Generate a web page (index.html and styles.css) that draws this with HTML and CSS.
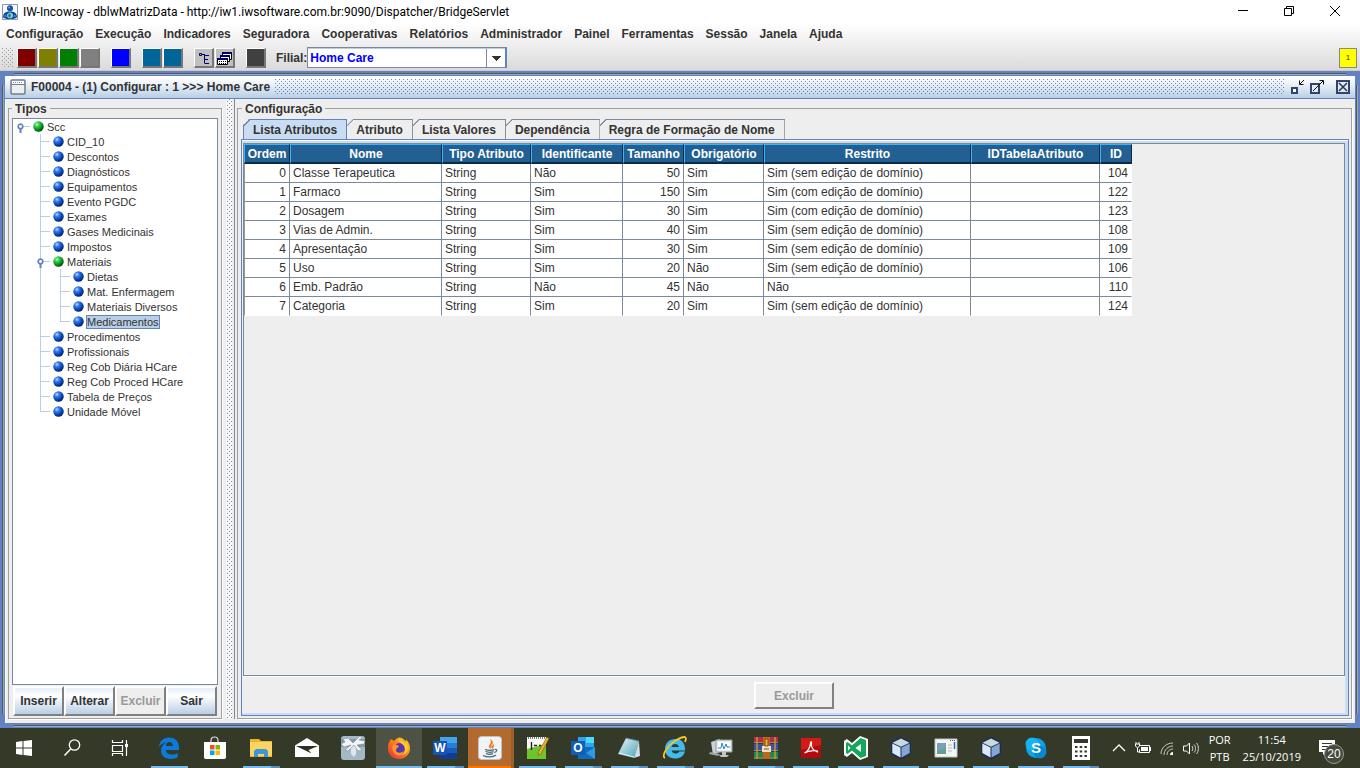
FILE: index.html
```html
<!DOCTYPE html>
<html lang="pt-BR">
<head>
    <meta charset="UTF-8">
    <title>IW-Incoway</title>
    <link rel="stylesheet" href="styles.css">
</head>
<body>
    <svg class="defs" width="0" height="0" aria-hidden="true">
        <defs>
            <radialGradient id="blueBall" cx="35%" cy="30%" r="70%">
                <stop offset="0" stop-color="#c4dcff"/>
                <stop offset="0.3" stop-color="#3c7ef0"/>
                <stop offset="0.65" stop-color="#0a4cc4"/>
                <stop offset="1" stop-color="#032468"/>
            </radialGradient>
            <radialGradient id="greenBall" cx="35%" cy="30%" r="70%">
                <stop offset="0" stop-color="#c8ffc8"/>
                <stop offset="0.3" stop-color="#38d050"/>
                <stop offset="0.65" stop-color="#0d9a26"/>
                <stop offset="1" stop-color="#04500f"/>
            </radialGradient>
            <linearGradient id="foxBody" x1="0" y1="1" x2="1" y2="0">
                <stop offset="0" stop-color="#f0204c"/>
                <stop offset="0.5" stop-color="#ff7a18"/>
                <stop offset="1" stop-color="#ffe03a"/>
            </linearGradient>
            <linearGradient id="glass" x1="0" y1="0" x2="1" y2="1">
                <stop offset="0" stop-color="#e6f8fb"/>
                <stop offset="1" stop-color="#4fa0b4"/>
            </linearGradient>
            <symbol id="blue" viewBox="0 0 11 11"><circle cx="5.5" cy="5.5" r="5.2" fill="url(#blueBall)"/></symbol>
            <symbol id="green" viewBox="0 0 11 11"><circle cx="5.5" cy="5.5" r="5.2" fill="url(#greenBall)"/></symbol>
            <symbol id="handle" viewBox="0 0 7 10">
                <circle cx="3.5" cy="3.5" r="2.3" fill="#fff" stroke="#6382bf" stroke-width="1.7"/>
                <path d="M3.5 6v4" stroke="#6382bf" stroke-width="2"/>
            </symbol>
            <symbol id="cube" viewBox="0 0 24 24">
                <path d="M12 1l10 5v12l-10 5.500-10-5.500V6z" fill="#1c2a58"/>
                <path d="M12 2.500l8.500 4.200-8.500 4-8.500-4z" fill="#c6dcdc"/>
                <path d="M3.300 7.500l8.200 4v10L3.300 17z" fill="#d9e8fa"/>
                <path d="M20.700 7.500l-8.200 4v10l8.200-4.500z" fill="#86a6d2"/>
            </symbol>
        </defs>
    </svg>

    <header class="title-bar">
        <svg class="app-icon" viewBox="0 0 16 16">
            <path d="M.5.5h15v15H.5z" fill="#f4f8fc" stroke="#8c98ac"/>
            <circle cx="8" cy="4.200" r="3" fill="#1450a8"/>
            <circle cx="7.200" cy="3.400" r="1" fill="#6ea2e4"/>
            <path d="M1 13c0-3 2-5 5-5.500h4c3 .5 5 2.500 5 5.500-1 1.500-3 2-7 2s-6-.5-7-2z" fill="#0c3c90"/>
            <circle cx="8" cy="11.500" r="3" fill="#7ad0e8"/>
            <path d="M7 9l2 2-1 3-2-2z" fill="#1f8a50"/>
            <path d="M2 11.500l2-1.500 1 3H2zM14 11.500L12 10l-1 3h3z" fill="#3a7ad4"/>
        </svg>
        <h1 class="app-title">IW-Incoway - dblwMatrizData - http://iw1.iwsoftware.com.br:9090/Dispatcher/BridgeServlet</h1>
        <button class="win-btn" aria-label="Minimizar"><svg viewBox="0 0 12 12"><path d="M1 5.500h10" stroke="#000"/></svg></button>
        <button class="win-btn" aria-label="Restaurar"><svg viewBox="0 0 12 12"><path d="M1.500 3.500h7v7h-7zM3.500 3V1.500h7v7H9" fill="none" stroke="#000"/></svg></button>
        <button class="win-btn" aria-label="Fechar"><svg viewBox="0 0 12 12"><path d="M1 1l10 10M11 1L1 11" stroke="#000"/></svg></button>
    </header>

    <div class="bars">
        <nav class="menu-bar">
            <button>Configuração</button>
            <button>Execução</button>
            <button>Indicadores</button>
            <button>Seguradora</button>
            <button>Cooperativas</button>
            <button>Relatórios</button>
            <button>Administrador</button>
            <button>Painel</button>
            <button>Ferramentas</button>
            <button>Sessão</button>
            <button>Janela</button>
            <button>Ajuda</button>
        </nav>

        <div class="tool-bar">
            <span class="grip"></span>
            <div class="tool-group">
                <button class="tool maroon" aria-label="Vermelho"></button>
                <button class="tool olive" aria-label="Oliva"></button>
                <button class="tool green" aria-label="Verde"></button>
                <button class="tool gray" aria-label="Cinza"></button>
            </div>
            <div class="tool-group">
                <button class="tool blue" aria-label="Azul"></button>
            </div>
            <div class="tool-group">
                <button class="tool teal" aria-label="Petróleo 1"></button>
                <button class="tool teal" aria-label="Petróleo 2"></button>
            </div>
            <div class="tool-group">
                <button class="tool silver" aria-label="Árvore">
                    <svg viewBox="0 0 17 17"><path d="M4.500 4.500h2v2h-2zM6.500 5.500h3M9.500 5v9M9.500 6.500H14M9.500 10.500H13M9.500 14.500H14" fill="none" stroke="#000070"/></svg>
                </button>
                <button class="tool silver" aria-label="Janelas">
                    <svg viewBox="0 0 17 17">
                        <path d="M6.500 3.500h9v7h-9z" fill="#fff" stroke="#000"/><path d="M6 3h10v2H6z" fill="#000070"/>
                        <path d="M4.500 6.500h9v6h-9z" fill="#fff" stroke="#000"/><path d="M4 6h10v2H4z" fill="#000070"/>
                        <path d="M1.500 9.500h10v6h-10z" fill="#fff" stroke="#000"/><path d="M1 9h11v2H1z" fill="#000070"/>
                        <path d="M3 12.500h7M3 14.500h7" stroke="#000" stroke-dasharray="1 1"/>
                    </svg>
                </button>
            </div>
            <div class="tool-group">
                <button class="tool dark" aria-label="Grafite"></button>
            </div>
            <label class="filial-label" for="filial">Filial:</label>
            <select class="filial" id="filial"><option>Home Care</option></select>
            <button class="alert-btn">1</button>
        </div>
    </div>

    <main class="frame">
        <div class="frame-title">
            <svg class="frame-icon" viewBox="0 0 16 16">
                <rect x="1" y="1" width="14" height="14" rx="1" fill="#eee" stroke="#6f7f8f" stroke-width="1.500"/>
                <path d="M2 2h12v3H2z" fill="#fff"/><path d="M3 3.500h10" stroke="#6382bf" stroke-dasharray="1 1"/>
                <path d="M1 5.500h14" stroke="#6f7f8f"/>
            </svg>
            <h2>F00004 - (1) Configurar : 1 &gt;&gt;&gt; Home Care</h2>
            <span class="bumps"></span>
            <button class="frame-btn" aria-label="Minimizar janela">
                <svg viewBox="0 0 16 16"><path d="M3 9h5v5H3z" fill="#fff" stroke="#33446a" stroke-width="2"/><path d="M15 1l-4 4M10.500 1.500v4h4" fill="none" stroke="#111"/></svg>
            </button>
            <button class="frame-btn" aria-label="Maximizar janela">
                <svg viewBox="0 0 16 16"><path d="M2 5h8v9H2z" fill="#e4edf7" stroke="#33446a" stroke-width="2"/><path d="M4 12l10-10M10.500 1.500h4v4" fill="none" stroke="#111"/></svg>
            </button>
            <button class="frame-btn close" aria-label="Fechar janela">
                <svg viewBox="0 0 16 16"><path d="M2 2h12v12H2z" fill="#dfe9f5" stroke="#33446a" stroke-width="2"/><path d="M4 4l8 8M12 4l-8 8" stroke="#26364f" stroke-width="1.500"/></svg>
            </button>
        </div>

        <div class="frame-body">
            <fieldset class="panel types">
                <legend>Tipos</legend>
                <div class="tree-box">
                    <ul class="tree">
                        <li>
                            <button class="handle" aria-label="Recolher Scc"><svg><use href="#handle"/></svg></button>
                            <div class="node"><svg><use href="#green"/></svg><span>Scc</span></div>
                            <ul>
                                <li><div class="node"><svg><use href="#blue"/></svg><span>CID_10</span></div></li>
                                <li><div class="node"><svg><use href="#blue"/></svg><span>Descontos</span></div></li>
                                <li><div class="node"><svg><use href="#blue"/></svg><span>Diagnósticos</span></div></li>
                                <li><div class="node"><svg><use href="#blue"/></svg><span>Equipamentos</span></div></li>
                                <li><div class="node"><svg><use href="#blue"/></svg><span>Evento PGDC</span></div></li>
                                <li><div class="node"><svg><use href="#blue"/></svg><span>Exames</span></div></li>
                                <li><div class="node"><svg><use href="#blue"/></svg><span>Gases Medicinais</span></div></li>
                                <li><div class="node"><svg><use href="#blue"/></svg><span>Impostos</span></div></li>
                                <li>
                                    <button class="handle" aria-label="Recolher Materiais"><svg><use href="#handle"/></svg></button>
                                    <div class="node"><svg><use href="#green"/></svg><span>Materiais</span></div>
                                    <ul>
                                        <li><div class="node"><svg><use href="#blue"/></svg><span>Dietas</span></div></li>
                                        <li><div class="node"><svg><use href="#blue"/></svg><span>Mat. Enfermagem</span></div></li>
                                        <li><div class="node"><svg><use href="#blue"/></svg><span>Materiais Diversos</span></div></li>
                                        <li><div class="node"><svg><use href="#blue"/></svg><span class="selected">Medicamentos</span></div></li>
                                    </ul>
                                </li>
                                <li><div class="node"><svg><use href="#blue"/></svg><span>Procedimentos</span></div></li>
                                <li><div class="node"><svg><use href="#blue"/></svg><span>Profissionais</span></div></li>
                                <li><div class="node"><svg><use href="#blue"/></svg><span>Reg Cob Diária HCare</span></div></li>
                                <li><div class="node"><svg><use href="#blue"/></svg><span>Reg Cob Proced HCare</span></div></li>
                                <li><div class="node"><svg><use href="#blue"/></svg><span>Tabela de Preços</span></div></li>
                                <li><div class="node"><svg><use href="#blue"/></svg><span>Unidade Móvel</span></div></li>
                            </ul>
                        </li>
                    </ul>
                </div>
                <div class="actions">
                    <button class="btn">Inserir</button>
                    <button class="btn">Alterar</button>
                    <button class="btn" disabled>Excluir</button>
                    <button class="btn">Sair</button>
                </div>
            </fieldset>

            <div class="splitter"></div>

            <fieldset class="panel config">
                <legend>Configuração</legend>
                <div class="tabs" role="tablist">
                    <button class="tab active" role="tab" aria-selected="true">Lista Atributos</button>
                    <button class="tab" role="tab">Atributo</button>
                    <button class="tab" role="tab">Lista Valores</button>
                    <button class="tab" role="tab">Dependência</button>
                    <button class="tab" role="tab">Regra de Formação de Nome</button>
                </div>
                <div class="tab-pane">
                    <div class="table-box">
                        <table class="grid">
                            <colgroup>
                                <col class="c-ordem"><col class="c-nome"><col class="c-tipo"><col class="c-ident"><col class="c-tam"><col class="c-obr"><col class="c-restrito"><col class="c-tabela"><col class="c-id">
                            </colgroup>
                            <thead>
                                <tr><th>Ordem</th><th>Nome</th><th>Tipo Atributo</th><th>Identificante</th><th>Tamanho</th><th>Obrigatório</th><th>Restrito</th><th>IDTabelaAtributo</th><th>ID</th></tr>
                            </thead>
                            <tbody>
                                <tr><td class="num">0</td><td>Classe Terapeutica</td><td>String</td><td>Não</td><td class="num">50</td><td>Sim</td><td>Sim (sem edição de domínio)</td><td></td><td class="num">104</td></tr>
                                <tr><td class="num">1</td><td>Farmaco</td><td>String</td><td>Sim</td><td class="num">150</td><td>Sim</td><td>Sim (com edição de domínio)</td><td></td><td class="num">122</td></tr>
                                <tr><td class="num">2</td><td>Dosagem</td><td>String</td><td>Sim</td><td class="num">30</td><td>Sim</td><td>Sim (com edição de domínio)</td><td></td><td class="num">123</td></tr>
                                <tr><td class="num">3</td><td>Vias de Admin.</td><td>String</td><td>Sim</td><td class="num">40</td><td>Sim</td><td>Sim (sem edição de domínio)</td><td></td><td class="num">108</td></tr>
                                <tr><td class="num">4</td><td>Apresentação</td><td>String</td><td>Sim</td><td class="num">30</td><td>Sim</td><td>Sim (sem edição de domínio)</td><td></td><td class="num">109</td></tr>
                                <tr><td class="num">5</td><td>Uso</td><td>String</td><td>Sim</td><td class="num">20</td><td>Não</td><td>Sim (sem edição de domínio)</td><td></td><td class="num">106</td></tr>
                                <tr><td class="num">6</td><td>Emb. Padrão</td><td>String</td><td>Não</td><td class="num">45</td><td>Não</td><td>Não</td><td></td><td class="num">110</td></tr>
                                <tr><td class="num">7</td><td>Categoria</td><td>String</td><td>Sim</td><td class="num">20</td><td>Sim</td><td>Sim (sem edição de domínio)</td><td></td><td class="num">124</td></tr>
                            </tbody>
                        </table>
                    </div>
                    <div class="pane-footer">
                        <button class="btn wide" disabled>Excluir</button>
                    </div>
                </div>
            </fieldset>
        </div>
    </main>

    <footer class="task-bar">
        <button class="task sys" aria-label="Iniciar"><svg viewBox="0 0 24 24"><path d="M4 6l6.500-1v6.500H4zM11.500 4.900L20 4v7.500h-8.500zM4 12.500h6.500V19L4 18zM11.500 12.500H20V20l-8.500-1z" fill="#fff"/></svg></button>
        <button class="task sys" aria-label="Pesquisar"><svg viewBox="0 0 24 24"><circle cx="14.500" cy="9" r="5.200" fill="none" stroke="#fff" stroke-width="1.300"/><path d="M10.700 13L4.500 19.500" stroke="#fff" stroke-width="1.500"/></svg></button>
        <button class="task sys" aria-label="Visão de tarefas"><svg viewBox="0 0 24 24"><path d="M3.500 4v2.500h10V4M3.500 9.500h10v6h-10zM3.500 20v-2.500h10V20M17.500 4v16" fill="none" stroke="#fff" stroke-width="1.200"/><path d="M16 8h3v3h-3z" fill="#fff"/></svg></button>

        <button class="task open" aria-label="Edge"><svg viewBox="0 0 24 24"><path d="M2 11C2.500 5 6.500 1.500 12 1.500c6 0 10 4.200 10 9.700V14H8.700c.3 3 3 4.500 6 4.500 2.300 0 4.300-.6 6-1.600v4.400c-2 1.100-4.300 1.600-7 1.600C7.500 22.900 4 19 4 14.500c0-3.300 1.900-6.300 5.500-8C5.800 6.900 3.500 8.500 2 11zm6.900-1h6.900c0-2.400-1.200-4-3.400-4-2 0-3.300 1.600-3.500 4z" fill="#0a7bdc"/></svg></button>
        <button class="task" aria-label="Store"><svg viewBox="0 0 24 24"><path d="M8 7V4.500C8 2 9.500 1 11.500 1S15 2 15 4.500V7" fill="none" stroke="#ddd" stroke-width="1.200"/><path d="M1 6h22v15.500l-1 1.500H2l-1-1.500z" fill="#fff"/><path d="M7 9h4.500v4.500H7z" fill="#f25022"/><path d="M12.500 9H17v4.500h-4.500z" fill="#7fba00"/><path d="M7 14.500h4.500V19H7z" fill="#00a4ef"/><path d="M12.500 14.500H17V19h-4.500z" fill="#ffb900"/></svg></button>
        <button class="task open many" aria-label="Explorador"><svg viewBox="0 0 24 24"><path d="M1 3h9l2 2h11v16H1z" fill="#f0b429"/><path d="M1 6h22v14H1z" fill="#fcd462"/><path d="M5 21v-6l2-2h10l2 2v6h-4v-3H9v3z" fill="#3e97d8"/></svg></button>
        <button class="task" aria-label="E-mail"><svg viewBox="0 0 24 24"><path d="M0 9.500L12 2l12 7.500V21H0z" fill="#fff"/><path d="M1 10h22l-9.500 4 3 3.500z" fill="#2c3023"/></svg></button>
        <button class="task" aria-label="Presente"><svg viewBox="0 0 24 24"><rect width="24" height="24" rx="3" fill="#a4b8c6"/><path d="M0 7h24" stroke="#8497a5" stroke-width="8"/><path d="M10 9h5v9l-2 3-3-3z" fill="#dfe7ec"/><path d="M12 7L7 2 2 3l2 3-4 2 3 3 7-2-6 5 3 1 6-6 4 6 4-1-5-5 7-1 1-3-6-1 3-2-2-2z" fill="#f1f5f7" stroke="#7f909c" stroke-width=".6"/></svg></button>
        <button class="task lit" aria-label="Firefox"><svg viewBox="0 0 24 24"><path d="M12 1.500C9 2.500 7 5 7 5L4 3C1 7 1 10 1 13c0 6 5 10 11 10s11-4.500 11-10.500C23 7 20 5 19 3.500c0 1-.3 2-.3 2C17 3 14 1 12 1.500z" fill="url(#foxBody)"/><circle cx="12.500" cy="13" r="6" fill="#5a32b4"/><path d="M6 9c2-1 4 0 6 1-1 2-3 2-3 4 0 3 4 4 8 1-1 4-4 5-6 4.500C7 19 4 14 6 9z" fill="#ff9a20"/><path d="M12 3c-1 3 3 4 5 7 2 4 0 8-3 9 6-.5 8-5 7-9-2-4-6-4-9-7z" fill="#ffc830"/></svg></button>
        <button class="task open many" aria-label="Word"><svg viewBox="0 0 24 24"><path d="M7 1h17v6H7z" fill="#41a5ee"/><path d="M7 7h17v5H7z" fill="#2b7cd3"/><path d="M7 12h17v5H7z" fill="#185abd"/><path d="M7 17h17v6H7z" fill="#103f91"/><path d="M0 5h14v14H0z" fill="#1553b5"/><text class="logo-text" x="7" y="16">W</text></svg></button>
        <button class="task java" aria-label="Java"><svg viewBox="0 0 24 24"><rect x=".5" y=".5" width="23" height="23" rx="3" fill="#f1f3f4" stroke="#b9c4cc"/><path d="M12.500 12.500c-4-3 3-4.500 0-9 5 4-1 5 0 9zM14.500 12.500c-2-2 0-3 1.500-4-1 1.500 0 2-1.500 4z" fill="#e76f1e" stroke="#e76f1e" stroke-width=".6"/><path d="M7 13.500c3 1 7 1 9.500 0M7.500 15.500c3 1 6 1 8 0M8 17.500c2 1 5 1 7 0M5 19.500c4 2 10 2 13-.5M17 13.500c3-.5 2 2.500-1 3" fill="none" stroke="#4a6478" stroke-width="1.200"/></svg></button>
        <button class="task open" aria-label="Notepad++"><svg viewBox="0 0 24 24"><path d="M2 1h19v22H2z" fill="#f7f8f2"/><path d="M2 13c6-2 13-3 19-6v16H2z" fill="#6cc52a"/><path d="M3 2h17" stroke="#555" stroke-width="1.500" stroke-dasharray="1 1"/><path d="M6.500 6v8M9 9.500h3M14 9.500h2" stroke="#222" stroke-width="1.400"/><path d="M22 1l2 1.500-8 15-3 2 .5-3.500z" fill="#f0b52c" stroke="#80551a" stroke-width=".6"/></svg></button>
        <button class="task open many" aria-label="Outlook"><svg viewBox="0 0 24 24"><path d="M7 1h16v11H7z" fill="#28a8ea"/><path d="M15 1h8v6h-8z" fill="#50d9ff"/><path d="M7 11h17v12H7z" fill="#0f6cbd"/><path d="M24 11v12l-9-6z" fill="#3199e0"/><path d="M0 5h14v14H0z" fill="#0f5fb8"/><text class="logo-text" x="7" y="16">O</text></svg></button>
        <button class="task open many" aria-label="Bloco de notas"><svg viewBox="0 0 24 24"><path d="M9 2l13 3-5 17L1 18z" fill="url(#glass)"/><path d="M22 5l1 15-6 2z" fill="#cde0e5"/><path d="M9 2l13 3" stroke="#60717a" stroke-width="1.500" stroke-dasharray="1 1"/><path d="M2 17l15 4" stroke="#dff5f8"/></svg></button>
        <button class="task open many" aria-label="Internet Explorer"><svg viewBox="0 0 24 24"><path d="M2 13C2 7 6.500 3 12.500 3S22 7 22 13v1.500H8.500c.5 2 2 3 4 3 1.700 0 3-.6 3.800-2H22c-1.300 4.500-5 7-9.800 7C6 22.500 2 18.500 2 13zm6.500-2h7.300c-.3-2-1.700-3-3.600-3s-3.300 1-3.700 3z" fill="#43baf0"/><path d="M2 22c-4-2 2-12 10-17S25-1 22 6" fill="none" stroke="#f5c52c" stroke-width="1.800"/></svg></button>
        <button class="task open narrow" aria-label="Monitor"><svg viewBox="0 0 24 24"><path d="M2 6l9-3v13l-7 3z" fill="#cdd1d3"/><path d="M1 16l10 2-2 2-9-2z" fill="#9da4a6"/><path d="M7 4h16v12H7z" fill="#e5ebef" stroke="#939ba0"/><path d="M9 6h12v8H9z" fill="#fff"/><path d="M9 12h3l1-5 2 6 2-5 1 3h3" fill="none" stroke="#2588be"/><path d="M13 16h4v3h3l-2 2h-6l-2-2h3z" fill="#bfc5c8"/></svg></button>
        <button class="task open many narrow" aria-label="WinRAR"><svg viewBox="0 0 24 24"><path d="M0 1h24v6H0z" fill="#b62c48"/><path d="M0 8h24v7H0z" fill="#434fa0"/><path d="M0 16h24v7H0z" fill="#298447"/><path d="M0 6.500h24M0 14.500h24M0 22h24" stroke="#8c8c78"/><path d="M3 1v22M21 1v22" stroke="#d4a736" stroke-width="1.200"/><path d="M9 1h7v22H9z" fill="#bd661d"/><path d="M8 10h9v6H8z" fill="#ece2cb"/><path d="M11 3h3v7h-3zM10 13h5" fill="#f3b432" stroke="#8c4a12"/></svg></button>
        <button class="task open narrow" aria-label="PDF"><svg viewBox="0 0 24 24"><path d="M2 2h20v20H2z" fill="#b30b0b"/><path d="M2 2h20v7L2 14z" fill="#d51a16"/><path d="M5.500 17c3-1 6-6 6-10 0-2 1.500-1 1 0-1 4 2 8 6 9 1-2-8-2-13 1z" fill="none" stroke="#fff" stroke-width="1.200"/></svg></button>
        <button class="task open narrow" aria-label="Visual Studio"><svg viewBox="0 0 24 24"><path d="M16 0l8 3v18l-8 3-8-7-5 4-3-2V5l3-2 5 4z" fill="#fff"/><path d="M16.500 2L22 4v16l-5.500 2L8 14.500 3.500 18 2 17V7l1.500-1L8 9.500zm.5 6l-5.500 4 5.500 4zM4 9.500v5L6.500 12z" fill="#14a65a" fill-rule="evenodd"/></svg></button>
        <button class="task open narrow" aria-label="VirtualBox"><svg><use href="#cube"/></svg></button>
        <button class="task open narrow" aria-label="Janela"><svg viewBox="0 0 24 24"><path d="M1 3h22v18H1z" fill="#f4f5f5" stroke="#bfc4c6"/><path d="M3 7h9v11H3z" fill="#63a18c"/><path d="M3 7h9v5L3 15z" fill="#7a9fb8"/><path d="M14 9h4M14 12h4M14 15h4" stroke="#bbb"/><path d="M20.500 6v7" stroke="#286bc0" stroke-width="1.500"/><path d="M16 4.500h5" stroke="#555" stroke-dasharray="1 1"/></svg></button>
        <button class="task open narrow" aria-label="VirtualBox 2"><svg><use href="#cube"/></svg></button>
        <button class="task open narrow" aria-label="Skype"><svg viewBox="0 0 24 24"><circle cx="12" cy="12" r="10" fill="#0aa5e8"/><circle cx="8" cy="8" r="6.500" fill="#18b4f1"/><circle cx="16" cy="16" r="6.500" fill="#0788d2"/><text class="logo-text big" x="12" y="17">S</text></svg></button>
        <button class="task open many narrow" aria-label="Calculadora"><svg viewBox="0 0 24 24"><path d="M3 0h18v24H3z" fill="#fff"/><path d="M5 3h14v4H5z" fill="#343a27"/><path d="M6 11h13M6 15.500h13M6 20h13" stroke="#343a27" stroke-width="2" stroke-dasharray="2.500 2.200"/></svg></button>

        <div class="tray">
            <button aria-label="Ícones ocultos"><svg viewBox="0 0 18 18"><path d="M3 12l6-6 6 6" fill="none" stroke="#fff" stroke-width="1.300"/></svg></button>
            <button aria-label="Bateria"><svg viewBox="0 0 18 18"><path d="M5.500 6.500h10v7h-10v-3" fill="none" stroke="#fff"/><path d="M7 8h7v4H7zM16 8h1v4h-1z" fill="#fff"/><path d="M2 3v2M5 3v2M1.500 5h4v2l-2 2-2-2zM3.500 9v4H5" fill="none" stroke="#fff"/></svg></button>
            <button aria-label="Rede sem fio"><svg viewBox="0 0 18 18"><path d="M3 15C3 9 8 4 15 4M6 16c0-5 4-9 9-9M9 16c0-3 2-6 6-6" fill="none" stroke="#c8cbc3"/><path d="M12 16c0-1.500 1-3 3-3v3z" fill="#fff"/></svg></button>
            <button aria-label="Volume"><svg viewBox="0 0 18 18"><path d="M1.500 7h3l3-3v11l-3-3h-3z" fill="none" stroke="#fff"/><path d="M10 7c1 1 1 4 0 5M12 5.500c2 2 2 6 0 8M14.500 4c2.500 3 2.500 8 0 11" fill="none" stroke="#d7d9d3"/></svg></button>
            <button class="tray-text">POR<br>PTB</button>
            <button class="tray-text clock">11:54<br>25/10/2019</button>
            <button class="notes" aria-label="Notificações">
                <svg viewBox="0 0 18 18"><path d="M0 1h16v12H7l-3 3v-3H0z" fill="#fff"/><path d="M3 4.500h10M3 7.500h10M3 10.500h6" stroke="#343a27"/></svg>
                <span class="count">20</span>
            </button>
        </div>
    </footer>
</body>
</html>
```
FILE: styles.css
```css
* {
    box-sizing: border-box;
    margin: 0;
    padding: 0;
}

body {
    display: flex;
    flex-direction: column;
    height: 100vh;
    overflow: hidden;
    background: #eee;
    color: #333;
    font-family: "Liberation Sans", Arial, sans-serif;
    font-size: 12px;
}

button {
    border: none;
    background: none;
    color: inherit;
    font: inherit;
}

svg {
    display: block;
}

.defs {
    position: absolute;
}

/* window title */
.title-bar {
    display: flex;
    align-items: center;
    height: 24px;
    background: #fff;
    color: #000;
}

.app-icon {
    width: 16px;
    height: 16px;
    margin: 0 5px 0 2px;
}

.app-title {
    flex: 1;
    font-family: Roboto, "Noto Sans", sans-serif;
    font-size: 12px;
    font-weight: normal;
    white-space: nowrap;
}

.win-btn {
    display: flex;
    justify-content: center;
    width: 46px;
    padding: 0 4px 3px 0;
}

.win-btn svg {
    width: 12px;
    height: 12px;
}

/* menu and tool bars */
.bars {
    background: linear-gradient(#fff, #dadada);
    border-bottom: 1px solid #ccc;
}

.menu-bar {
    display: flex;
    height: 21px;
}

.menu-bar button {
    padding: 0 6px 2px;
    font-weight: bold;
    white-space: nowrap;
}

.tool-bar {
    display: flex;
    align-items: center;
    height: 25px;
    padding: 0 2px;
}

.grip {
    width: 11px;
    height: 20px;
    margin-right: 4px;
    background:
        conic-gradient(from 270deg at 1px 1px, #999 90deg, transparent 0) 0 0 / 4px 4px,
        conic-gradient(from 270deg at 1px 1px, #999 90deg, transparent 0) 2px 2px / 4px 4px;
}

.tool-group {
    display: flex;
    gap: 1px;
    margin-right: 11px;
}

.tool {
    width: 20px;
    height: 20px;
    border: 1px solid #fff;
    border-right: 2px solid #777;
    border-bottom: 2px solid #777;
}

.maroon { background: #800000; }
.olive { background: #808000; }
.green { background: #008000; }
.gray { background: #808080; }
.blue { background: #0000ff; }
.teal { background: #006699; }
.silver { background: #c0c0c0; }
.dark { background: #404040; }

.filial-label {
    margin-left: -1px;
    font-weight: bold;
}

.filial {
    width: 200px;
    height: 21px;
    padding-left: 2px;
    appearance: none;
    border: 1px solid #7a8a99;
    border-right: 2px solid #6382bf;
    border-radius: 0;
    background:
        conic-gradient(from 315deg at 50% 100%, #333 90deg, transparent 0) right 4px top 8px / 10px 5px no-repeat,
        linear-gradient(#7a8a99, #7a8a99) right 18px top / 1px 100% no-repeat,
        #fff;
    box-shadow: inset 0 1px #b8cfe5;
    color: #0000ff;
    font: bold 12px "Liberation Sans", Arial, sans-serif;
}

.alert-btn {
    width: 18px;
    height: 20px;
    margin: 0 1px 0 auto;
    border: 1px solid #888;
    background: #ff0;
    font-size: 8px;
}

/* internal frame */
.frame {
    display: flex;
    flex: 1;
    flex-direction: column;
    min-height: 0;
    padding: 5px 5px 5px 5px;
    background:
        linear-gradient(#333, #b8cfe5) 14px 2px / calc(100% - 28px) 2px no-repeat,
        linear-gradient(#333, #b8cfe5) 14px calc(100% - 1px) / calc(100% - 28px) 2px no-repeat,
        linear-gradient(to right, #333, #b8cfe5) 2px 14px / 2px calc(100% - 28px) no-repeat,
        linear-gradient(to right, #333, #b8cfe5) calc(100% - 2px) 14px / 2px calc(100% - 28px) no-repeat,
        #6382bf;
}

.frame-title {
    display: flex;
    align-items: center;
    height: 23px;
    padding: 0 4px 0 5px;
    border-bottom: 1px solid #6382bf;
    background: linear-gradient(#fff, #f0f5fa 30%, #b8cfe5);
}

.frame-icon {
    width: 16px;
    height: 16px;
    margin-right: 5px;
}

.frame-title h2 {
    font-size: 12px;
    white-space: nowrap;
}

.bumps {
    flex: 1;
    height: 16px;
    margin: 0 4px 0 5px;
    background:
        conic-gradient(from 270deg at 1px 1px, #6382bf 90deg, transparent 0) 0 0 / 4px 4px,
        conic-gradient(from 270deg at 1px 1px, #6382bf 90deg, transparent 0) 2px 2px / 4px 4px;
}

.frame-btn {
    margin-right: 4px;
}

.frame-btn.close {
    margin: 0 0 0 6px;
}

.frame-btn svg {
    width: 16px;
    height: 16px;
}

.frame-body {
    display: flex;
    flex: 1;
    min-height: 0;
    border-left: 1px solid #fff;
    background: #eee;
}

.panel {
    display: flex;
    flex-direction: column;
    min-width: 0;
    border: 1px solid #a0a0a0;
    box-shadow: 1px 1px #fff;
}

.panel legend {
    margin-left: 3px;
    padding: 1px 3px 0;
    font-weight: bold;
    line-height: 14px;
}

.types {
    flex: none;
    width: 214px;
    margin: 2px 4px 4px 2px;
    padding: 2px 3px;
}

.types legend,
.config legend {
    margin-left: 0;
}

.tree-box {
    flex: 1;
    min-height: 0;
    overflow: hidden;
    padding: 0 0 0 7px;
    border: 1px solid #7a8a99;
    background: #fff;
}

.tree,
.tree ul {
    list-style: none;
}

.tree {
    font-size: 11px;
    line-height: 15px;
}

.tree ul {
    margin-left: 7px;
}

.tree li {
    position: relative;
    padding-left: 13px;
    background: linear-gradient(#b8cfe5, #b8cfe5) 0 7px / 10px 1px no-repeat;
}

.tree ul li {
    background:
        linear-gradient(#b8cfe5, #b8cfe5) 0 0 / 1px 100% no-repeat,
        linear-gradient(#b8cfe5, #b8cfe5) 0 7px / 10px 1px no-repeat;
}

.tree ul li:last-child {
    background:
        linear-gradient(#b8cfe5, #b8cfe5) 0 0 / 1px 8px no-repeat,
        linear-gradient(#b8cfe5, #b8cfe5) 0 7px / 10px 1px no-repeat;
}

.handle {
    position: absolute;
    top: 4px;
    left: -3px;
}

.handle svg {
    width: 7px;
    height: 10px;
}

.node {
    display: flex;
    align-items: center;
    gap: 2px;
    height: 15px;
    white-space: nowrap;
}

.node svg {
    width: 11px;
    height: 11px;
}

.node span {
    padding: 0 1px;
    line-height: 14px;
}

.node .selected {
    outline: 1px solid #6382bf;
    outline-offset: -1px;
    background: #b8cfe5;
}

.actions {
    display: flex;
    padding: 1px 1px 0;
}

.btn {
    flex: 1;
    height: 30px;
    border: 2px solid #fff;
    border-right-color: #808080;
    border-bottom-color: #808080;
    background: linear-gradient(#e6eef7, #fff 30%, #b8cfe5);
    font-weight: bold;
}

.btn:disabled {
    background: #eee;
    color: #999;
}

.btn.wide {
    flex: none;
    width: 80px;
    height: 27px;
}

.splitter {
    width: 9px;
    margin-bottom: 4px;
    border-right: 1px solid #7a8a99;
    background:
        linear-gradient(#eee, #eee) 6px 0 / 2px 100% no-repeat,
        conic-gradient(from 270deg at 1px 1px, #808890 90deg, transparent 0) 3px 0 / 4px 4px,
        conic-gradient(from 270deg at 1px 1px, #808890 90deg, transparent 0) 1px 2px / 4px 4px,
        #f6f6f6;
}

.config {
    flex: 1;
    margin: 2px 3px 4px 2px;
    padding: 3px 2px 2px 3px;
}

.config legend {
    margin-left: 1px;
}

/* tabs */
.tabs {
    display: flex;
    padding-left: 2px;
}

.tab {
    height: 20px;
    padding: 0 9px;
    border-top: 1px solid #7a8a99;
    border-right: 1px solid #7a8a99;
    background: linear-gradient(135deg, transparent 4px, #7a8a99 4px, #7a8a99 5px, transparent 5px) 0 -1px / 8px 8px no-repeat, #eee;
    clip-path: polygon(6px 0, 100% 0, 100% 100%, 0 100%, 0 6px);
    font-weight: bold;
    white-space: nowrap;
}

.tab.active {
    border-color: #6382bf;
    border-left: 1px solid #6382bf;
    background-color: #c8ddf2;
}

.tab-pane {
    display: flex;
    flex: 1;
    flex-direction: column;
    min-height: 0;
    padding: 3px 3px 0 1px;
    border: 1px solid #6382bf;
    background: #eee;
    box-shadow: inset 0 1px #fff, inset 0 3px #c8ddf2, inset -3px 0 #c8ddf2, inset 0 -2px #c8ddf2;
}

.table-box {
    flex: 1;
    min-height: 0;
    overflow: hidden;
    border: 1px solid #7a8a99;
}

.pane-footer {
    display: flex;
    justify-content: center;
    padding: 5px 0 6px;
    border-top: 1px solid #fff;
}

.grid {
    width: 888px;
    table-layout: fixed;
    border-spacing: 0;
    background: #fff;
}

.c-ordem { width: 46px; }
.c-nome { width: 152px; }
.c-tipo { width: 89px; }
.c-ident { width: 92px; }
.c-tam { width: 61px; }
.c-obr { width: 80px; }
.c-restrito { width: 207px; }
.c-tabela { width: 129px; }
.c-id { width: 32px; }

.grid th {
    height: 20px;
    border: 1px solid #3bb4fc;
    border-right-color: #0b2b44;
    border-bottom: 2px solid #0b2b44;
    background: #226093;
    color: #fff;
    white-space: nowrap;
}

.grid td {
    height: 19px;
    padding: 0 3px;
    border-right: 1px solid #7a8a99;
    border-bottom: 1px solid #7a8a99;
    white-space: nowrap;
}

.grid td:first-child {
    border-left: 1px solid #999;
}

.grid td:last-child {
    border-right-color: #fff;
}

.grid tr:last-child td {
    border-bottom-color: #fff;
}

.grid .num {
    text-align: right;
}

/* windows task bar */
.task-bar {
    display: flex;
    height: 40px;
    background: #343a27;
    color: #fff;
}

.task {
    display: flex;
    flex: none;
    align-items: center;
    justify-content: center;
    width: 46px;
}

.task svg {
    width: 24px;
    height: 24px;
}

.logo-text {
    fill: #fff;
    font-family: "Liberation Sans", Arial, sans-serif;
    font-size: 12px;
    font-weight: bold;
    text-anchor: middle;
}

.logo-text.big {
    font-size: 15px;
}

.task.sys {
    width: 48px;
}

.task.sys:nth-child(3) {
    width: 50px;
}

.task.narrow {
    width: 45px;
}

.task.open {
    background: linear-gradient(#76b9ed, #76b9ed) 5px 100% / calc(100% - 9px) 2px no-repeat;
}

.task.many {
    background:
        linear-gradient(#5a8fb8, #5a8fb8) calc(100% - 4px) 100% / 9px 2px no-repeat,
        linear-gradient(#76b9ed, #76b9ed) 5px 100% / calc(100% - 9px) 2px no-repeat;
}

.task.lit {
    background: linear-gradient(#76b9ed, #76b9ed) 0 100% / 100% 2px no-repeat, #4d5344;
}

.task.java {
    border-right: 3px solid #98602c;
    background: linear-gradient(#ff7300, #ff7300) 0 100% / 100% 2px no-repeat, #b36a2e;
}

.tray {
    display: flex;
    flex: 1;
    align-items: center;
    justify-content: flex-end;
    gap: 6px;
    padding-right: 10px;
}

.tray svg {
    width: 18px;
    height: 18px;
}

.tray-text {
    margin-left: 3px;
    font-family: "Open Sans", "Noto Sans", sans-serif;
    font-size: 11px;
    line-height: 17px;
}

.clock {
    margin-left: 6px;
}

.notes {
    position: relative;
    margin: 0 13px 0 12px;
}

.count {
    position: absolute;
    top: 5px;
    left: 5px;
    width: 20px;
    height: 20px;
    border: 1px solid #999;
    border-radius: 50%;
    background: #454a3c;
    font-size: 12px;
    line-height: 18px;
}
```
